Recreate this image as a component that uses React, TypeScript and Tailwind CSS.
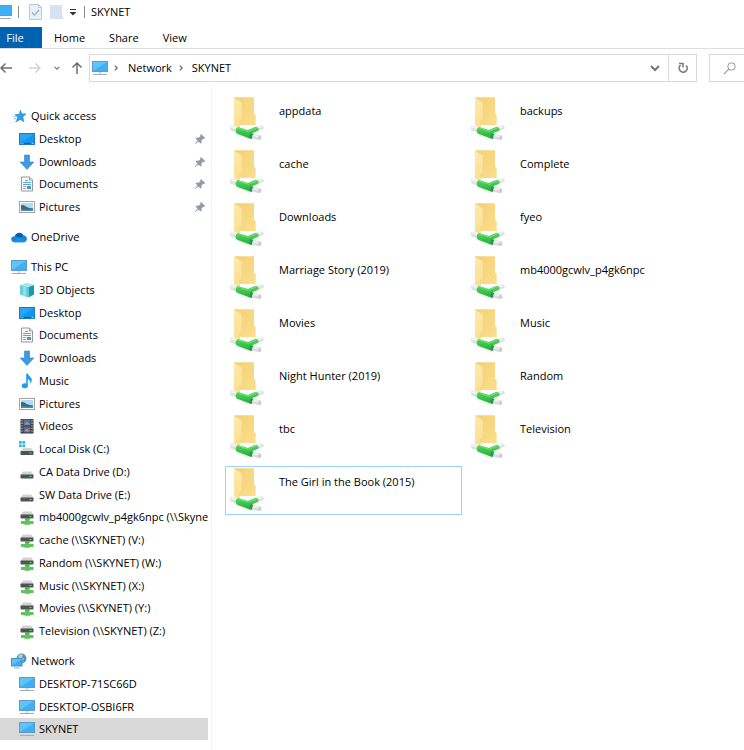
import React, { useState } from 'react';
import clsx from 'clsx';

type IconName =
  | 'star'
  | 'desktop'
  | 'download'
  | 'document'
  | 'picture'
  | 'cloud'
  | 'pc'
  | 'cube'
  | 'music'
  | 'video'
  | 'systemDrive'
  | 'drive'
  | 'netDrive'
  | 'network';

interface NavItem {
  id: string;
  label: string;
  icon: IconName;
  pinned?: boolean;
}

// First entry of each group is its heading
const NAV_GROUPS: NavItem[][] = [
  [
    { id: 'quick', label: 'Quick access', icon: 'star' },
    { id: 'q-desktop', label: 'Desktop', icon: 'desktop', pinned: true },
    { id: 'q-downloads', label: 'Downloads', icon: 'download', pinned: true },
    { id: 'q-documents', label: 'Documents', icon: 'document', pinned: true },
    { id: 'q-pictures', label: 'Pictures', icon: 'picture', pinned: true },
  ],
  [{ id: 'onedrive', label: 'OneDrive', icon: 'cloud' }],
  [
    { id: 'pc', label: 'This PC', icon: 'pc' },
    { id: '3d', label: '3D Objects', icon: 'cube' },
    { id: 'desktop', label: 'Desktop', icon: 'desktop' },
    { id: 'documents', label: 'Documents', icon: 'document' },
    { id: 'downloads', label: 'Downloads', icon: 'download' },
    { id: 'music', label: 'Music', icon: 'music' },
    { id: 'pictures', label: 'Pictures', icon: 'picture' },
    { id: 'videos', label: 'Videos', icon: 'video' },
    { id: 'c', label: 'Local Disk (C:)', icon: 'systemDrive' },
    { id: 'd', label: 'CA Data Drive (D:)', icon: 'drive' },
    { id: 'e', label: 'SW Data Drive (E:)', icon: 'drive' },
    { id: 'u', label: 'mb4000gcwlv_p4gk6npc (\\\\Skynet', icon: 'netDrive' },
    { id: 'v', label: 'cache (\\\\SKYNET) (V:)', icon: 'netDrive' },
    { id: 'w', label: 'Random (\\\\SKYNET) (W:)', icon: 'netDrive' },
    { id: 'x', label: 'Music (\\\\SKYNET) (X:)', icon: 'netDrive' },
    { id: 'y', label: 'Movies (\\\\SKYNET) (Y:)', icon: 'netDrive' },
    { id: 'z', label: 'Television (\\\\SKYNET) (Z:)', icon: 'netDrive' },
  ],
  [
    { id: 'network', label: 'Network', icon: 'network' },
    { id: 'n1', label: 'DESKTOP-71SC66D', icon: 'pc' },
    { id: 'n2', label: 'DESKTOP-OSBI6FR', icon: 'pc' },
    { id: 'skynet', label: 'SKYNET', icon: 'pc' },
  ],
];

const FOLDERS = [
  'appdata',
  'backups',
  'cache',
  'Complete',
  'Downloads',
  'fyeo',
  'Marriage Story (2019)',
  'mb4000gcwlv_p4gk6npc',
  'Movies',
  'Music',
  'Night Hunter (2019)',
  'Random',
  'tbc',
  'Television',
  'The Girl in the Book (2015)',
];

// --- ICONS ---

const GLYPHS: Record<IconName, React.ReactNode> = {
  star: (
    <>
      <path d="M9.500 2.200l1.200 3.600 4.300.2-3.200 2.900 1 4.800-3.600-2.300-3.900 2.500 1.200-4.600-2.300-2.800 4-.3z" fill="#2d9fea" stroke="#2487cf" strokeWidth=".6" />
      <path d="M2.600 8.600l2.400-.6M2.800 11.400l2.200-1.200M4.200 13.800l1.400-1.200" stroke="#6bbcf0" strokeWidth="1" />
    </>
  ),
  desktop: (
    <>
      <rect x=".5" y="2.500" width="15" height="11" fill="#1596ee" stroke="#1b7cc4" />
      <path d="M1 12V3h14z" fill="#2ba4f8" />
      <path d="M1 12.500h14" stroke="#0f5c9c" />
      <path d="M1.500 12.500h1M3.500 12.500h1M12.500 12.500h2" stroke="#b0dcfa" />
    </>
  ),
  download: <path d="M5.500 1h5v7h4.300L8 15.500 1.200 8h4.300z" fill="#4199e2" stroke="#3286cf" strokeWidth=".6" />,
  document: (
    <>
      <path d="M2.500 1h8l3 3v11h-11z" fill="#fafafa" stroke="#999" />
      <path d="M10.500 1v3h3" fill="#ddd" stroke="#999" />
      <path d="M6 4.500h3M4 6.500h8M4 8.500h8" stroke="#55a9dd" />
      <path d="M4 10.500h3M4 12.500h3" stroke="#a9a9a9" />
      <rect x="8" y="10" width="4" height="3" fill="#4c9cb5" />
    </>
  ),
  picture: (
    <>
      <rect x=".5" y="2.500" width="15" height="11" fill="#fff" stroke="#a3a3a3" />
      <rect x="2" y="4" width="12" height="8" fill="#b5d8f3" />
      <path d="M2 6c3-.6 5 1.600 7 2.600s3.500.6 5 .8V12H2z" fill="#356c80" />
      <path d="M2 10.500c4-.8 8 .2 12 0V12H2z" fill="#4c88b9" />
    </>
  ),
  cloud: (
    <>
      <path d="M3.800 7.200A4.500 4.500 0 0 1 12 6c2.300.3 3.900 1.800 3.900 3.800 0 2-1.500 3.400-3.400 3.400H3.700C1.700 13.200.2 11.900.2 10s1.500-2.800 3.600-2.800z" fill="#1283da" />
      <path d="M3.800 7.200A4.500 4.500 0 0 1 12 6l-1.500 2.800L7 8z" fill="#0b5cb4" />
      <path d="M1 12l8.500-3.500L15 11.700c-.6.900-1.500 1.500-2.500 1.500H3.700c-1.100 0-2.100-.5-2.700-1.200z" fill="#1b8fe0" />
    </>
  ),
  pc: (
    <>
      <rect x=".5" y="1.500" width="15" height="10" fill="#3eb0f6" stroke="#5c9cc5" />
      <path d="M1 11V2h14z" fill="#62c3fa" />
      <path d="M6.500 12h3v2h-3z" fill="#d5dde2" />
      <path d="M1 14.500h14" stroke="#9aabba" />
    </>
  ),
  cube: (
    <>
      <path d="M1 3l7-2.200L15 3 9.500 5z" fill="#a5e6ec" />
      <path d="M1 3l8.500 2v10.500L1 12.500z" fill="#62cfdb" />
      <path d="M9.500 5L15 3v9.500l-5.500 3z" fill="#149cb1" />
      <path d="M4 3.700l3 .7v10.200l-3-1.100z" fill="#8de0e7" />
    </>
  ),
  music: (
    <>
      <path d="M7.200.500h1.600c.2 2.500 4.100 3.200 4 6.500-.1 1.700-.9 2.700-1.900 3.500.5-2.600-.4-3.600-2.100-4.500v7H7.200z" fill="#1a9cf0" />
      <ellipse cx="5.800" cy="12.800" rx="3" ry="2.500" fill="#1a9cf0" />
    </>
  ),
  video: (
    <>
      <rect x="1.500" y="1" width="13" height="14.500" fill="#3d3d3d" />
      <path d="M3 2v13M13 2v13" stroke="#c4c4c4" strokeWidth="1.200" strokeDasharray="1.300 1.300" />
      <rect x="4.500" y="1.500" width="7" height="6" fill="#4272b5" />
      <rect x="4.500" y="8.500" width="7" height="6" fill="#3e69b8" />
      <path d="M5 6.500l3-3 3 3zM5 13.500l3-3 3 3z" fill="#b99a48" />
      <path d="M5 3h2v1.500H5zM9 10h2v1.500H9z" fill="#b95468" />
    </>
  ),
  systemDrive: (
    <>
      <path d="M0 0h2.700v2.700H0zM3.400 0h2.700v2.700H3.400zM0 3.400h2.700v2.700H0zM3.400 3.400h2.700v2.700H3.400z" fill="#26b8ef" />
      <path d="M4 7h8l2.500 3.500h-13z" fill="#d2d2d2" />
      <rect x="1.500" y="10" width="13" height="4" rx=".8" fill="#505254" />
      <rect x="10.500" y="11.500" width="2" height="1" fill="#53e45b" />
    </>
  ),
  drive: (
    <>
      <path d="M4 7.500h8l2.500 3.500h-13z" fill="#d2d2d2" />
      <rect x="1.500" y="10.500" width="13" height="4" rx=".8" fill="#505254" />
      <rect x="10.500" y="12" width="2" height="1" fill="#53e45b" />
    </>
  ),
  netDrive: (
    <>
      <path d="M4 2.500h8L14.500 6h-13z" fill="#d2d2d2" />
      <rect x="1.500" y="5.500" width="13" height="4" rx=".8" fill="#505254" />
      <rect x="10.500" y="7" width="2" height="1" fill="#53e45b" />
      <path d="M6 9.500h4.500v2.500h4v3h-3.500v.8h-5.500V15H2v-3h4z" fill="#5fc45c" />
      <path d="M6 9.500h4.500v1H6z" fill="#3e9c41" />
    </>
  ),
  network: (
    <>
      <circle cx="10.500" cy="5.500" r="5" fill="#5693b4" />
      <path d="M7 3c2-2 4-2 5-1l-1 2 2 2-2 3-2-2z" fill="#a7d2df" />
      <rect x=".5" y="5.500" width="10.500" height="7.500" fill="#3fa9ee" stroke="#4a90c0" />
      <path d="M1 12.500V6h9.500z" fill="#60bef6" />
      <path d="M3 15h5.500" stroke="#9aacb9" />
    </>
  ),
};

const Icon: React.FC<{ name: IconName }> = ({ name }) => (
  <svg viewBox="0 0 16 16" fill="none" className="size-4 shrink-0" aria-hidden="true">
    {GLYPHS[name]}
  </svg>
);

const PinIcon = () => (
  <svg viewBox="0 0 12 12" className="size-3 shrink-0" aria-hidden="true">
    <path d="M7 1l4.200 4-1 .9-.9-.2-1.800 1.900.1 2.200-1 .8-2.200-2.200L1 11.300.700 11l2.800-3.500L1.600 5.500l.9-.9 2.200.1 1.800-1.800L6.200 2z" fill="#8f9ba6" />
  </svg>
);

// Folder standing on a network pipe
const SharedFolderIcon = () => (
  <svg viewBox="27 18 108 138" fill="none" className="h-[46px] w-9 shrink-0" aria-hidden="true">
    <defs>
      <linearGradient id="folderBack" x1="0" y1="0" x2="1" y2="1">
        <stop offset="0" stopColor="#f3d075" />
        <stop offset="1" stopColor="#fbdf8c" />
      </linearGradient>
      <linearGradient id="folderFront" x1="0" y1="0" x2="0" y2="1">
        <stop offset="0" stopColor="#fee9ae" />
        <stop offset="1" stopColor="#fcdf8e" />
      </linearGradient>
      <linearGradient id="pipe" x1="0" y1="0" x2="0" y2="1">
        <stop offset="0" stopColor="#5ad764" />
        <stop offset=".5" stopColor="#38c549" />
        <stop offset="1" stopColor="#2aa93e" />
      </linearGradient>
    </defs>
    <path d="M43 22h59v49l5 4v30H60L43 100z" fill="url(#folderBack)" />
    <path d="M42 23l22 14q2 1 2 4v48l-7 5v20q-3 0-5-2l-12-6z" fill="url(#folderFront)" />
    <path d="M65.500 40v49l-7 5v16" stroke="#efcd74" />
    <path d="M52 134q24 14 44 17" stroke="#eef2ef" strokeWidth="3" />
    <path d="M30 109q2-3 6-2l18 5v16l-22-6q-4-6-2-13z" fill="#dfe2e3" />
    <path d="M31 110q2-2 5-1l17 4v5l-22-5z" fill="#f4f5f5" />
    <path d="M108 111l17-5q6 2 7 8-1 3-4 4l-18 5z" fill="#dfe2e3" />
    <path d="M109 112l15-4 2 4-16 4z" fill="#f4f5f5" />
    <path d="M54 111l30 9 22-10q7 0 10 6 1 5-3 7l-17 7q5 5 3 12-2 5-8 4l-40-15q-5-4-4-11 2-8 7-9z" fill="url(#pipe)" />
    <path d="M56 114l29 10 22-10" stroke="#79e27d" strokeWidth="3" strokeLinecap="round" strokeLinejoin="round" />
    <path d="M94 130q-8 6-4 15l7 1q-3-9 4-14z" fill="#239654" />
    <path d="M101 132l20 4q5 4 3 10-2 5-7 5l-20-5q-3-8 4-14z" fill="#dadede" />
    <path d="M101 134l18 4-2 4-18-4z" fill="#f4f5f5" />
    <ellipse cx="119" cy="143" rx="4" ry="6" fill="#c6cccd" />
  </svg>
);

const ArrowIcon: React.FC<{ className: string }> = ({ className }) => (
  <svg viewBox="0 0 12 12" fill="none" stroke="currentColor" strokeWidth="1.500" className={clsx('size-3', className)} aria-hidden="true">
    <path d="M12 6H1M5.500 1.500L1 6l4.500 4.500" />
  </svg>
);

const ChevronIcon: React.FC<{ className: string }> = ({ className }) => (
  <svg viewBox="0 0 10 10" fill="none" stroke="currentColor" strokeWidth="2" className={className} aria-hidden="true">
    <path d="M1 3l4 4 4-4" />
  </svg>
);

// --- SECTIONS ---

const TitleBar = () => (
  <header className="flex h-[27px] items-center pb-[3px]">
    <svg viewBox="0 0 12 16" fill="none" className="h-4 w-3" aria-hidden="true">
      <path d="M-4 1.500h15.500v10H-4z" fill="#3eb0f6" stroke="#5c9cc5" />
      <path d="M0 14.500h11" stroke="#9aabba" />
    </svg>
    <span className="ml-1.5 h-3 w-px bg-[#8a8a8a]" />
    <button type="button" aria-label="Properties" className="ml-2.5">
      <svg viewBox="0 0 13 16" fill="none" className="h-4 w-[13px]" aria-hidden="true">
        <path d="M.5.500h9l3 3v12H.5z" fill="#eaf0fa" stroke="#bcc8dc" />
        <path d="M9.500.500v3h3" stroke="#bcc8dc" />
        <path d="M3 8.500l2.500 2.500L10 6" stroke="#9db0cf" strokeWidth="1.500" />
      </svg>
    </button>
    <button type="button" aria-label="New folder" className="ml-2">
      <svg viewBox="0 0 13 16" className="h-4 w-[13px]" aria-hidden="true">
        <path d="M0 1h12v9l1 1v4H0z" fill="#d9e2f3" />
      </svg>
    </button>
    <button type="button" aria-label="Customize toolbar" className="ml-1.5">
      <svg viewBox="0 0 8 8" className="size-2" aria-hidden="true">
        <path d="M1 1h6v1H1zM.5 4h7L4 7.500z" fill="#333" />
      </svg>
    </button>
    <span className="ml-[7px] h-3 w-px bg-[#8a8a8a]" />
    <h1 className="ml-1.5">SKYNET</h1>
  </header>
);

const RibbonTabs = () => (
  <nav className="flex h-[22px] border-b border-[#dedfe0]">
    <button type="button" className="w-[42px] bg-[#0063b1] pr-3 text-white">File</button>
    <button type="button" className="ml-3">Home</button>
    <button type="button" className="ml-6">Share</button>
    <button type="button" className="ml-6">View</button>
  </nav>
);

const AddressBar = () => (
  <div className="flex h-[38px] items-center">
    <button type="button" aria-label="Back"><ArrowIcon className="text-[#6c6c6c]" /></button>
    <button type="button" aria-label="Forward" className="ml-[17px]"><ArrowIcon className="rotate-180 text-[#d4d4d4]" /></button>
    <button type="button" aria-label="Recent locations" className="ml-[13px]"><ChevronIcon className="size-1.5 text-[#777]" /></button>
    <button type="button" aria-label="Up" className="ml-[11px]"><ArrowIcon className="rotate-90 text-[#6c6c6c]" /></button>
    <div className="ml-1.5 flex h-7 min-w-0 flex-1 items-center border border-[#d9d9d9]">
      <span className="ml-0.5 flex"><Icon name="pc" /></span>
      <ChevronIcon className="ml-[5px] size-1.5 -rotate-90 text-[#666]" />
      <button type="button" className="ml-[9px]">Network</button>
      <ChevronIcon className="ml-1.5 size-1.5 -rotate-90 text-[#666]" />
      <button type="button" className="ml-2">SKYNET</button>
      <button type="button" aria-label="Previous locations" className="ml-auto px-2">
        <ChevronIcon className="size-2.5 text-[#777]" />
      </button>
      <button type="button" aria-label="Refresh" className="flex h-full w-7 items-center justify-center border-l border-[#d9d9d9]">
        <svg viewBox="0 0 12 12" fill="none" stroke="#777" strokeWidth="1.600" className="size-3" aria-hidden="true">
          <path d="M9.200 3.500A4 4 0 1 1 3.500 3.200" />
          <path d="M2 1.500h4v4" strokeWidth="1.500" />
        </svg>
      </button>
    </div>
    <button type="button" aria-label="Search SKYNET" className="ml-3 flex h-7 w-[35px] items-center border border-r-0 border-[#d9d9d9] pl-[13px]">
      <svg viewBox="0 0 13 13" fill="none" stroke="#999" className="size-[13px]" aria-hidden="true">
        <circle cx="8.500" cy="4.500" r="3.700" />
        <path d="M5.800 7.200L.8 12.200" strokeWidth="1.200" />
      </svg>
    </button>
  </div>
);

interface SidebarProps {
  current: string;
  onOpen: (id: string) => void;
}

const Sidebar: React.FC<SidebarProps> = ({ current, onOpen }) => (
  <nav aria-label="Folders" className="flex w-[212px] shrink-0 flex-col gap-[7px] border-r border-[#f3f3f3] pt-[17px] pr-[3px]">
    {NAV_GROUPS.map((group) => (
      <ul key={group[0].id}>
        {group.map((item, i) => (
          <li key={item.id} className="h-[23px] nth-[4n]:h-[22px]">
            <button
              type="button"
              onClick={() => onOpen(item.id)}
              className={clsx(
                'flex h-full w-full items-center gap-1 overflow-hidden pr-0.5 text-left whitespace-nowrap',
                i === 0 ? 'pl-[11px]' : 'pl-[19px]',
                item.id === current && 'bg-[#d9d9d9]'
              )}
            >
              <Icon name={item.icon} />
              <span className="flex-1">{item.label}</span>
              {item.pinned && <PinIcon />}
            </button>
          </li>
        ))}
      </ul>
    ))}
  </nav>
);

export default function App() {
  const [current, setCurrent] = useState('skynet');
  const [focused, setFocused] = useState('The Girl in the Book (2015)');

  return (
    <div className="flex min-h-screen flex-col bg-white font-['Open_Sans','Noto_Sans',sans-serif] text-[11px] leading-4 text-black">
      <TitleBar />
      <RibbonTabs />
      <AddressBar />
      <div className="flex flex-1">
        <Sidebar current={current} onOpen={setCurrent} />
        <main className="grid flex-1 grid-cols-[repeat(auto-fill,237px)] content-start gap-1 pt-2 pl-[13px]">
          {FOLDERS.map((name) => (
            <button
              key={name}
              type="button"
              onClick={() => setFocused(name)}
              className={clsx(
                'flex h-[49px] items-start gap-[14px] border pl-[3px] text-left',
                name === focused ? 'border-[#99d1ff]' : 'border-transparent'
              )}
            >
              <SharedFolderIcon />
              <span className="pt-[7px]">{name}</span>
            </button>
          ))}
        </main>
      </div>
    </div>
  );
}
